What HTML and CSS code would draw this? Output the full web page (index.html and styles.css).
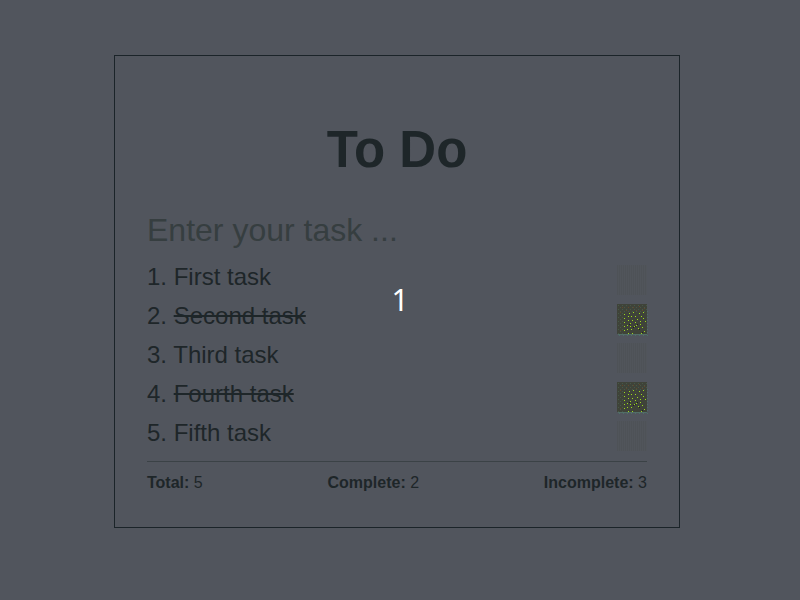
FILE: index.html
```html
<!DOCTYPE html>
<html lang="en">
<head>
<meta charset="utf-8">
<title>To Do</title>
<link rel="stylesheet" href="styles.css">
</head>
<body>
<svg class="defs" width="0" height="0" aria-hidden="true">
  <defs>
    <pattern id="speck" width="4" height="4" patternUnits="userSpaceOnUse">
      <path d="M1 1h1v1h-1zM3 3h1v1h-1z" fill="#465848"/>
    </pattern>
    <pattern id="fringe" width="4" height="3" patternUnits="userSpaceOnUse">
      <path d="M0 0h2v1h-2zM2 1h1v1h-1zM1 2h1v1h-1z" fill="#4d6e69"/>
    </pattern>
    <symbol id="checked" viewBox="0 0 34 34">
      <path d="M0 0h30v30h-30z" fill="#3f4339"/>
      <path d="M0 0h30v9h-23v21h-7z" fill="url(#speck)"/>
      <path d="M5 3h1v1h-1zM11 3h1v1h-1zM16 3h1v1h-1zM22 2h1v1h-1zM27 4h1v1h-1zM9 6h1v1h-1zM19 6h1v1h-1zM25 6h1v1h-1zM3 8h1v1h-1zM3 26h1v1h-1z" fill="#654729"/>
      <path d="M30 6h2v26h-31v-2h29z" fill="url(#fringe)"/>
      <path d="M1 30h28v1h-28z" fill="#526e67"/>
      <path d="M12 9h1v1h-1zM16 8h1v1h-1zM22 9h1v1h-1zM26 8h1v1h-1zM7 10h1v1h-1zM11 12h1v1h-1zM14 12h1v1h-1zM18 12h1v1h-1zM24 12h1v1h-1zM7 14h1v1h-1zM20 15h1v1h-1zM26 14h1v1h-1zM11 16h1v1h-1zM15 16h1v1h-1zM23 17h1v1h-1zM28 17h1v1h-1zM7 18h1v1h-1zM18 18h1v1h-1zM13 19h1v1h-1zM10 21h1v1h-1zM19 21h1v1h-1zM23 20h1v1h-1zM7 22h1v1h-1zM13 22h1v1h-1zM17 22h1v1h-1zM25 23h1v1h-1zM21 24h1v1h-1zM10 25h1v1h-1zM14 25h1v1h-1zM27 27h1v1h-1zM7 26h1v1h-1zM11 29h1v1h-1zM15 29h1v1h-1zM24 29h1v1h-1z" fill="#9bd91d" shape-rendering="crispEdges"/>
      <path d="M16 23h1v1h-1zM18 22h1v1h-1zM20 20h1v1h-1zM12 20h1v1h-1zM22 25h1v1h-1zM25 28h1v1h-1z" fill="#20251c"/>
    </symbol>
  </defs>
</svg>
<main class="card">
  <h1 class="title">To Do</h1>
  <input class="entry" type="text" placeholder="Enter your task ..." aria-label="Task">
  <ul class="tasks">
    <li class="task"><span>1. <span>First task</span></span><i class="check open"></i></li>
    <li class="task"><span>2. <s>Second task</s></span><svg class="check"><use href="#checked" width="34" height="34"/></svg></li>
    <li class="task"><span>3. <span>Third task</span></span><i class="check open"></i></li>
    <li class="task"><span>4. <s>Fourth task</s></span><svg class="check"><use href="#checked" width="34" height="34"/></svg></li>
    <li class="task"><span>5. <span>Fifth task</span></span><i class="check open"></i></li>
  </ul>
  <footer class="summary">
    <span><b>Total:</b> 5</span>
    <span><b>Complete:</b> 2</span>
    <span><b>Incomplete:</b> 3</span>
  </footer>
</main>
<div class="counter">1</div>
</body>
</html>
```
FILE: styles.css
```css
* { box-sizing: border-box; }
body {
  margin: 0;
  height: 600px;
  overflow: hidden;
  background: #51555d;
  color: #1e2629;
  font-family: "Liberation Sans", Arial, sans-serif;
}
.defs { position: absolute; }
.card {
  display: flow-root;
  width: 566px;
  height: 473px;
  margin: 55px 0 0 114px;
  padding: 64px 32px 0;
  border: 1px solid #1b2429;
}
.title { margin: 0; font-size: 51px; line-height: 60px; text-align: center; }
.entry {
  display: block;
  width: 100%;
  height: 40px;
  margin: 30px 0 7px;
  padding: 0;
  border: 0;
  background: none;
  font: 32px "Liberation Sans", Arial, sans-serif;
}
.entry::placeholder { color: #363e40; opacity: 1; }
.tasks { margin: 0; padding: 0; list-style: none; }
.task {
  display: flex;
  justify-content: space-between;
  height: 39px;
  font-size: 24px;
  line-height: 39px;
}
.check { width: 30px; height: 30px; margin-top: 8px; overflow: visible; }
.open { background: repeating-linear-gradient(90deg, #4e5257 0 1px, #51555b 1px 2px); }
.summary {
  display: flex;
  justify-content: space-between;
  margin-top: 9px;
  padding-top: 11px;
  border-top: 1px solid #3b4246;
  font-size: 16px;
  line-height: 20px;
}
.counter {
  position: absolute;
  inset: 0 0 2px;
  display: grid;
  place-items: center;
  color: #fff;
  font: 400 30px "Noto Sans", "Open Sans", sans-serif;
}
```
